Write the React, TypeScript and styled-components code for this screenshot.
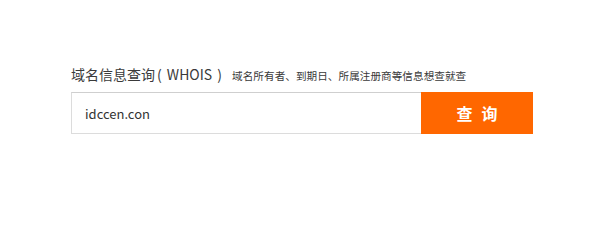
import React from "react";
import styled, { createGlobalStyle } from "styled-components";

const GlobalStyle = createGlobalStyle`
  html, body {
    margin: 0;
    padding: 0;
    background: #ffffff;
  }
  body {
    font-family: "Noto Sans CJK SC", "Noto Sans", sans-serif;
  }
`;

const Wrapper = styled.div`
  width: 600px;
  height: 210px;
  box-sizing: border-box;
  padding: 63px 0 0 71px;
`;

const Header = styled.div`
  display: flex;
  align-items: baseline;
  height: 22px;
  margin-bottom: 7px;
`;

const Title = styled.h2`
  margin: 0;
  font-size: 14px;
  font-weight: 400;
  color: #3a3a3a;
  line-height: 22px;
  white-space: nowrap;
`;

const TitleTag = styled.span`
  margin-left: 2px;
  word-spacing: 2px;
`;

const SubTitle = styled.span`
  margin-left: 10px;
  font-size: 10.6px;
  letter-spacing: 0.05px;
  color: #3a3a3a;
  line-height: 22px;
  white-space: nowrap;
`;

const SearchBar = styled.form`
  display: flex;
  width: 462px;
  height: 42px;
`;

const Input = styled.input`
  flex: 1;
  min-width: 0;
  box-sizing: border-box;
  height: 42px;
  margin: 0;
  padding: 0 13px;
  border: 1px solid #dcdcdc;
  border-top-color: #cfcfcf;
  border-right: none;
  outline: none;
  font-family: "Noto Sans CJK SC", "Noto Sans", sans-serif;
  font-size: 13px;
  color: #333333;
  background: #ffffff;
`;

const SearchButton = styled.button`
  width: 112px;
  height: 42px;
  margin: 0;
  padding: 0;
  border: none;
  background: #ff6700;
  color: #ffffff;
  font-family: "Noto Sans CJK SC", sans-serif;
  font-size: 16px;
  font-weight: 700;
  letter-spacing: 9px;
  text-indent: 9px;
  cursor: pointer;
`;

export default function App() {
  return (
    <Wrapper>
      <GlobalStyle />
      <Header>
        <Title>
          域名信息查询<TitleTag>( WHOIS )</TitleTag>
        </Title>
        <SubTitle>域名所有者、到期日、所属注册商等信息想查就查</SubTitle>
      </Header>
      <SearchBar onSubmit={(e) => e.preventDefault()}>
        <Input defaultValue="idccen.con" />
        <SearchButton type="submit">查询</SearchButton>
      </SearchBar>
    </Wrapper>
  );
}
